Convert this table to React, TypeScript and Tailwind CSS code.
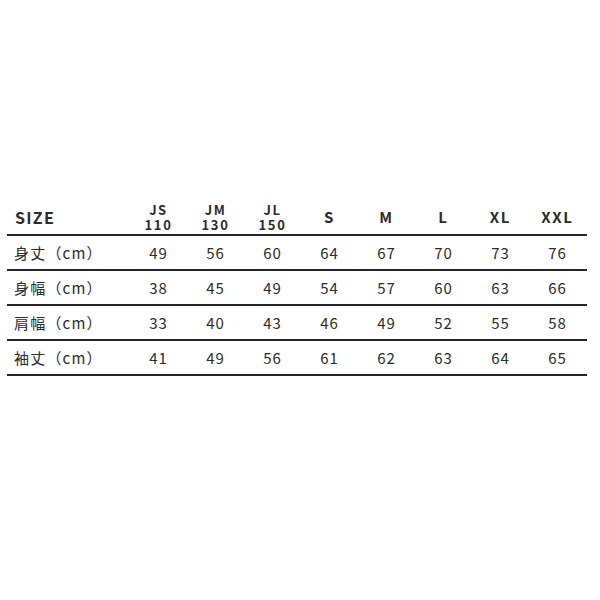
const sizes = [
  { top: "JS", sub: "110" },
  { top: "JM", sub: "130" },
  { top: "JL", sub: "150" },
  { top: "S" },
  { top: "M" },
  { top: "L" },
  { top: "XL" },
  { top: "XXL" },
];

const rows = [
  { label: "身丈（cm）", values: [49, 56, 60, 64, 67, 70, 73, 76] },
  { label: "身幅（cm）", values: [38, 45, 49, 54, 57, 60, 63, 66] },
  { label: "肩幅（cm）", values: [33, 40, 43, 46, 49, 52, 55, 58] },
  { label: "袖丈（cm）", values: [41, 49, 56, 61, 62, 63, 64, 65] },
];

const font = { fontFamily: '"Noto Sans CJK JP", "Noto Sans", sans-serif' };

export default function App() {
  return (
    <div className="h-[600px] w-[600px] bg-white pl-[7px] pt-[199px] text-[#2b2b2b]" style={font}>
      <div className="w-[580px]">
        <div className="grid h-[37px] grid-cols-[123px_repeat(8,57px)] items-center border-b-2 border-[#262626]">
          <div className="pl-[8px] text-[16px] font-bold tracking-[0.08em]">SIZE</div>
          {sizes.map((s) => (
            <div key={s.top} className="text-center font-bold tracking-[0.1em]">
              {s.sub ? (
                <p className="text-[13px] leading-[15px]">
                  {s.top}
                  <br />
                  {s.sub}
                </p>
              ) : (
                <p className="text-[15px] leading-[18px]">{s.top}</p>
              )}
            </div>
          ))}
        </div>
        {rows.map((row) => (
          <div
            key={row.label}
            className="grid h-[35px] grid-cols-[123px_repeat(8,57px)] items-center border-b-2 border-[#262626] pt-[2px]"
          >
            <div className="pl-[7px] text-[15px] tracking-[0.08em]">{row.label}</div>
            {row.values.map((v, i) => (
              <div key={i} className="text-center text-[15px] tracking-[0.06em]">
                {v}
              </div>
            ))}
          </div>
        ))}
      </div>
    </div>
  );
}
